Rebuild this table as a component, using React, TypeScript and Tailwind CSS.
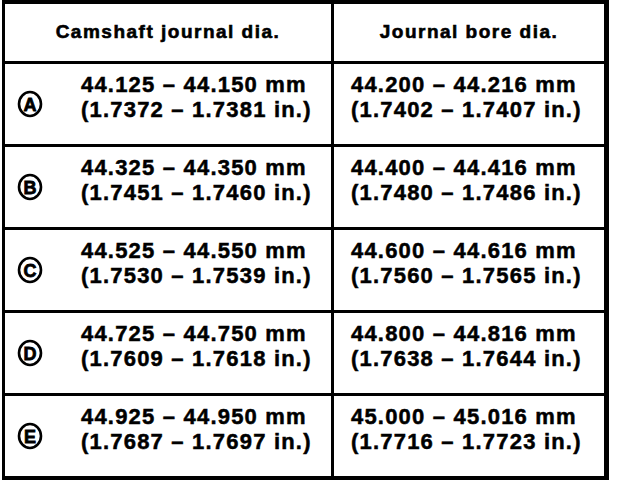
import React from 'react';

type Row = {
  grade: string;
  journalMm: string;
  journalIn: string;
  boreMm: string;
  boreIn: string;
};

const rows: Row[] = [
  { grade: 'A', journalMm: '44.125 – 44.150 mm', journalIn: '(1.7372 – 1.7381 in.)', boreMm: '44.200 – 44.216 mm', boreIn: '(1.7402 – 1.7407 in.)' },
  { grade: 'B', journalMm: '44.325 – 44.350 mm', journalIn: '(1.7451 – 1.7460 in.)', boreMm: '44.400 – 44.416 mm', boreIn: '(1.7480 – 1.7486 in.)' },
  { grade: 'C', journalMm: '44.525 – 44.550 mm', journalIn: '(1.7530 – 1.7539 in.)', boreMm: '44.600 – 44.616 mm', boreIn: '(1.7560 – 1.7565 in.)' },
  { grade: 'D', journalMm: '44.725 – 44.750 mm', journalIn: '(1.7609 – 1.7618 in.)', boreMm: '44.800 – 44.816 mm', boreIn: '(1.7638 – 1.7644 in.)' },
  { grade: 'E', journalMm: '44.925 – 44.950 mm', journalIn: '(1.7687 – 1.7697 in.)', boreMm: '45.000 – 45.016 mm', boreIn: '(1.7716 – 1.7723 in.)' },
];

// circled grade letter, scanned look: thick ring, heavy letter
const Grade = ({ letter }: { letter: string }) => (
  <svg width="26" height="28" viewBox="0 0 26 28" className="shrink-0">
    <ellipse cx="13" cy="14" rx="11" ry="12" fill="none" stroke="black" strokeWidth="2.6" />
    <text
      x="13"
      y="20.5"
      textAnchor="middle"
      fontSize="18"
      fontWeight="bold"
      fontFamily='"Liberation Sans", Arial, sans-serif'
      stroke="black"
      strokeWidth="0.8"
    >
      {letter}
    </text>
  </svg>
);

const Values = ({ mm, inch }: { mm: string; inch: string }) => (
  <div className="text-[22px] font-bold leading-[25px] tracking-[1.2px] [-webkit-text-stroke:0.5px_black]">
    <p>{mm}</p>
    <p>{inch}</p>
  </div>
);

export default function App() {
  return (
    <div className="min-h-[484px] w-[624px] bg-white text-black" style={{ fontFamily: '"Liberation Sans", Arial, sans-serif' }}>
      <div className="ml-[2px] w-[607px] border-b-[4px] border-l-[3px] border-r-[5px] border-t-[4px] border-black">
        {/* header */}
        <div className="flex h-[57px] text-[19px] font-bold tracking-[1.5px] [-webkit-text-stroke:0.6px_black]">
          <div className="flex w-[329px] items-center justify-center border-r-[3px] border-black">
            Camshaft journal dia.
          </div>
          <div className="flex flex-1 items-center justify-center">Journal bore dia.</div>
        </div>

        {rows.map(row => (
          <div key={row.grade} className="flex h-[83px] border-t-[3px] border-black">
            <div className="flex w-[329px] border-r-[3px] border-black">
              <div className="flex w-[76px] shrink-0 items-center pl-[12px]">
                <Grade letter={row.grade} />
              </div>
              <div className="pt-[8px]">
                <Values mm={row.journalMm} inch={row.journalIn} />
              </div>
            </div>
            <div className="flex-1 pl-[17px] pt-[8px]">
              <Values mm={row.boreMm} inch={row.boreIn} />
            </div>
          </div>
        ))}
      </div>
    </div>
  );
}
